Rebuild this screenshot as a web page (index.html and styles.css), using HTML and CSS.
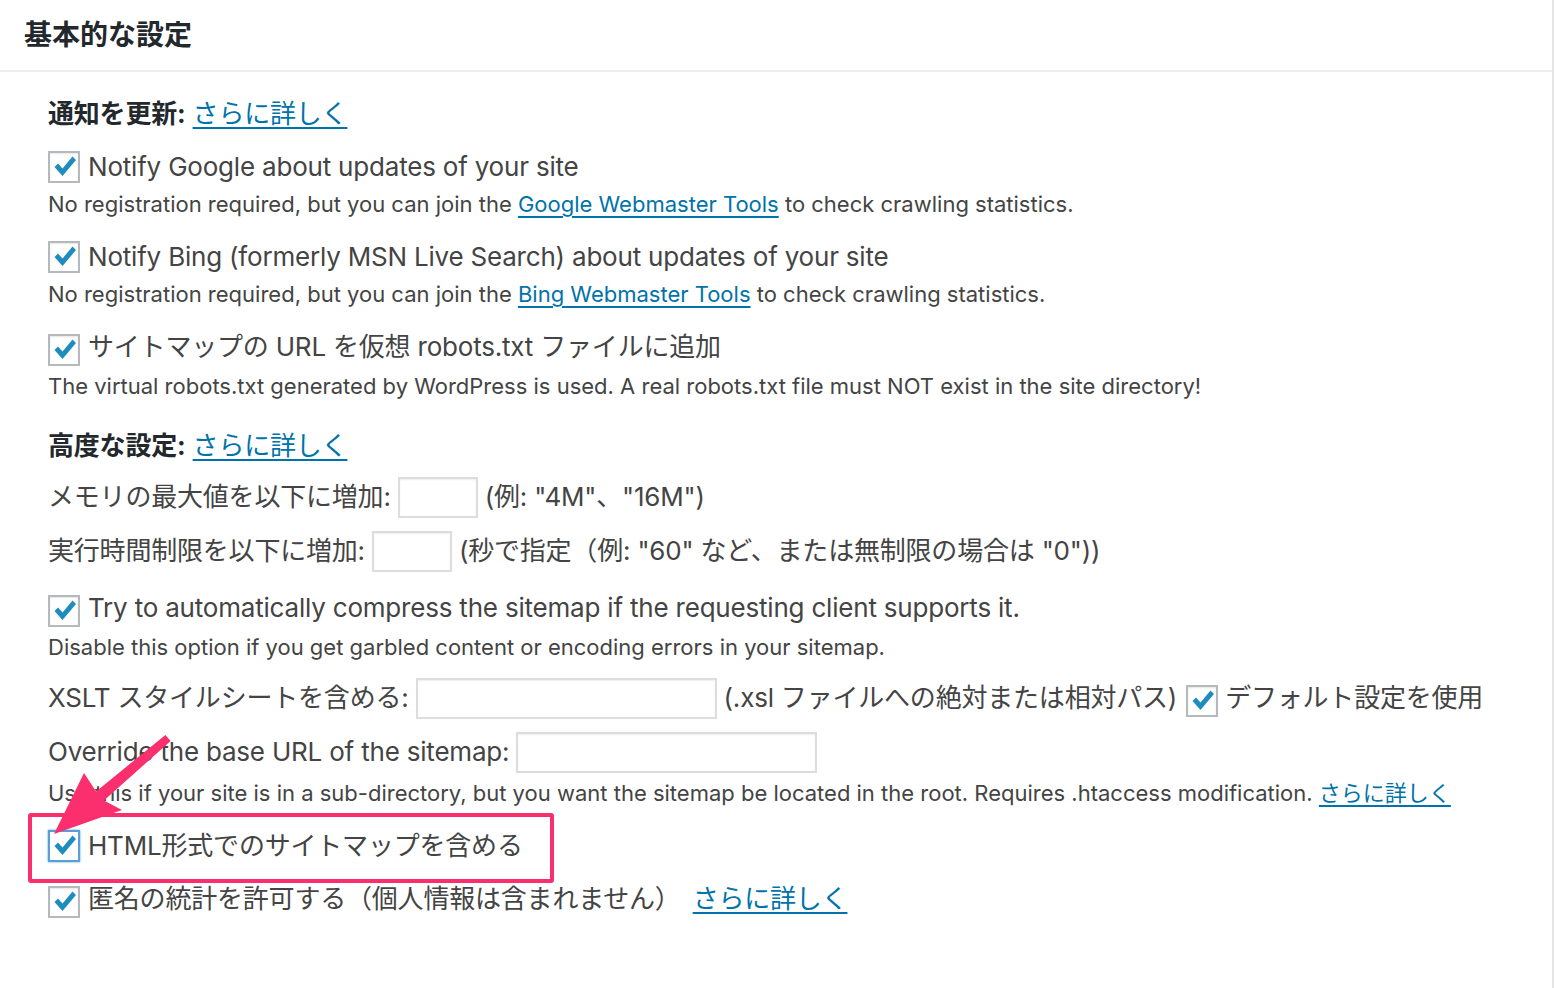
FILE: index.html
```html
<!DOCTYPE html>
<html lang="ja">
<head>
<meta charset="utf-8">
<title>基本的な設定</title>
<link rel="stylesheet" href="styles.css">
</head>
<body>
<div class="panel">
  <h2 class="title">基本的な設定</h2>
  <div class="body">
    <div class="sec"><b>通知を更新:</b> <a href="#">さらに詳しく</a></div>

    <label class="cb-row"><span class="cb"><svg viewBox="0 0 32 32"><polygon points="6.5,16 10,12.5 14.5,17.5 24.5,5.5 28,9 14.5,25"/></svg></span>Notify Google about updates of your site</label>
    <p class="desc">No registration required, but you can join the <a href="#">Google Webmaster Tools</a> to check crawling statistics.</p>

    <label class="cb-row"><span class="cb"><svg viewBox="0 0 32 32"><polygon points="6.5,16 10,12.5 14.5,17.5 24.5,5.5 28,9 14.5,25"/></svg></span>Notify Bing (formerly MSN Live Search) about updates of your site</label>
    <p class="desc">No registration required, but you can join the <a href="#">Bing Webmaster Tools</a> to check crawling statistics.</p>

    <label class="cb-row alt"><span class="cb low"><svg viewBox="0 0 32 32"><polygon points="6.5,16 10,12.5 14.5,17.5 24.5,5.5 28,9 14.5,25"/></svg></span>サイトマップの URL を仮想 robots.txt ファイルに追加</label>
    <p class="desc">The virtual robots.txt generated by WordPress is used. A real robots.txt file must NOT exist in the site directory!</p>

    <div class="sec"><b>高度な設定:</b> <a href="#">さらに詳しく</a></div>

    <div class="field">メモリの最大値を以下に増加: <span class="inp w80"></span> (例: "4M"、"16M")</div>
    <div class="field">実行時間制限を以下に増加: <span class="inp w80"></span> (秒で指定（例: "60" など、または無制限の場合は "0"))</div>

    <label class="cb-row alt"><span class="cb low"><svg viewBox="0 0 32 32"><polygon points="6.5,16 10,12.5 14.5,17.5 24.5,5.5 28,9 14.5,25"/></svg></span>Try to automatically compress the sitemap if the requesting client supports it.</label>
    <p class="desc">Disable this option if you get garbled content or encoding errors in your sitemap.</p>

    <div class="field">XSLT スタイルシートを含める: <span class="inp w300"></span> (.xsl ファイルへの絶対または相対パス) <span class="cb low inline"><svg viewBox="0 0 32 32"><polygon points="6.5,16 10,12.5 14.5,17.5 24.5,5.5 28,9 14.5,25"/></svg></span> デフォルト設定を使用</div>
    <div class="field">Override the base URL of the sitemap: <span class="inp w300"></span></div>
    <p class="desc">Use this if your site is in a sub-directory, but you want the sitemap be located in the root. Requires .htaccess modification. <a href="#">さらに詳しく</a></p>

    <label class="cb-row"><span class="cb focus"><svg viewBox="0 0 32 32"><polygon points="6.5,16 10,12.5 14.5,17.5 24.5,5.5 28,9 14.5,25"/></svg></span>HTML形式でのサイトマップを含める</label>
    <label class="cb-row"><span class="cb low"><svg viewBox="0 0 32 32"><polygon points="6.5,16 10,12.5 14.5,17.5 24.5,5.5 28,9 14.5,25"/></svg></span>匿名の統計を許可する（個人情報は含まれません）<a class="more" href="#">さらに詳しく</a></label>
  </div>

  <div class="highlight"></div>
  <svg class="arrow" viewBox="0 0 200 1000" width="200" height="1000">
    <polygon points="165.4,735 170.6,741 103.9,800.6 122,810 54,834 84,773 96.1,791.4"/>
  </svg>
</div>
</body>
</html>
```

FILE: styles.css
```css
* { box-sizing: border-box; }
html, body { margin: 0; padding: 0; background: #fff; }
body {
  font-family: Inter, "Noto Sans CJK JP", sans-serif;
  color: #444;
}
.panel {
  position: relative;
  width: 1554px;
  height: 988px;
  background: #fff;
  border-right: 2px solid #e5e5e5;
}
.title {
  margin: 0;
  height: 72px;
  padding-left: 24px;
  line-height: 70px;
  font-size: 28px;
  font-weight: 700;
  color: #23282d;
  border-bottom: 2px solid #eeeeee;
}
.body {
  padding-left: 48px;
}
a { color: #0073aa; text-decoration: underline; text-underline-offset: 4px; text-decoration-thickness: 2px; }
.sec {
  margin-top: 26px;
  height: 32px;
  line-height: 32px;
  font-size: 26px;
  letter-spacing: -0.2px;
  color: #23282d;
}
.sec b { font-weight: 700; }
.sec a { font-weight: 400; }
.cb-row {
  display: flex;
  align-items: center;
  height: 32px;
  font-size: 26px;
  letter-spacing: -0.2px;
  line-height: 32px;
  white-space: nowrap;
}
.cb {
  flex: none;
  width: 32px;
  height: 32px;
  margin-right: 8px;
  border: 2px solid #b4b9be;
  background: #fff;
  box-shadow: inset 0 1px 2px rgba(0,0,0,.1);
  display: inline-flex;
  align-items: center;
  justify-content: center;
}
.cb svg { width: 32px; height: 32px; fill: #1e8cbe; margin: -2px; }
.cb.low { position: relative; top: 3px; }
.cb.focus { border-color: #5b9dd9; box-shadow: 0 0 2px rgba(30,140,190,.8); }
.cb.inline { vertical-align: middle; margin: 0 0 0 2px; }
.more { margin-left: 12px; }
.desc {
  margin: 7px 0 0;
  height: 28px;
  line-height: 28px;
  font-size: 22px;
  white-space: nowrap;
}
.field {
  height: 42px;
  line-height: 42px;
  font-size: 26px;
  letter-spacing: -0.2px;
  white-space: nowrap;
  display: flex;
  align-items: center;
  gap: 7px;
}
.inp {
  display: inline-block;
  height: 41px;
  border: 2px solid #dddddd;
  background: #fff;
  box-shadow: inset 0 1px 2px rgba(0,0,0,.07);
}
.w80 { width: 80px; }
.w300 { width: 301px; }

.desc + .cb-row { margin-top: 23px; }
.cb-row + .desc { margin-top: 7px; }
.cb-row.alt + .desc { margin-top: 9px; }
.desc + .sec { margin-top: 30px; }
.sec + .cb-row { margin-top: 21px; }
.sec + .field { margin-top: 14px; }
.field + .field { margin-top: 12px; }
.field + .cb-row { margin-top: 20px; }
.desc + .field { margin-top: 16px; }
.field + .desc { margin-top: 6px; }
.cb-row + .cb-row { margin-top: 21px; }

.highlight {
  position: absolute;
  left: 28px;
  top: 813px;
  width: 526px;
  height: 70px;
  border: 4px solid #fb2f6e;
  border-radius: 3px;
}
.arrow {
  position: absolute;
  left: 0;
  top: 0;
  width: 200px;
  height: 1000px;
  overflow: visible;
}
.arrow polygon { fill: #fb2f6e; }
```
